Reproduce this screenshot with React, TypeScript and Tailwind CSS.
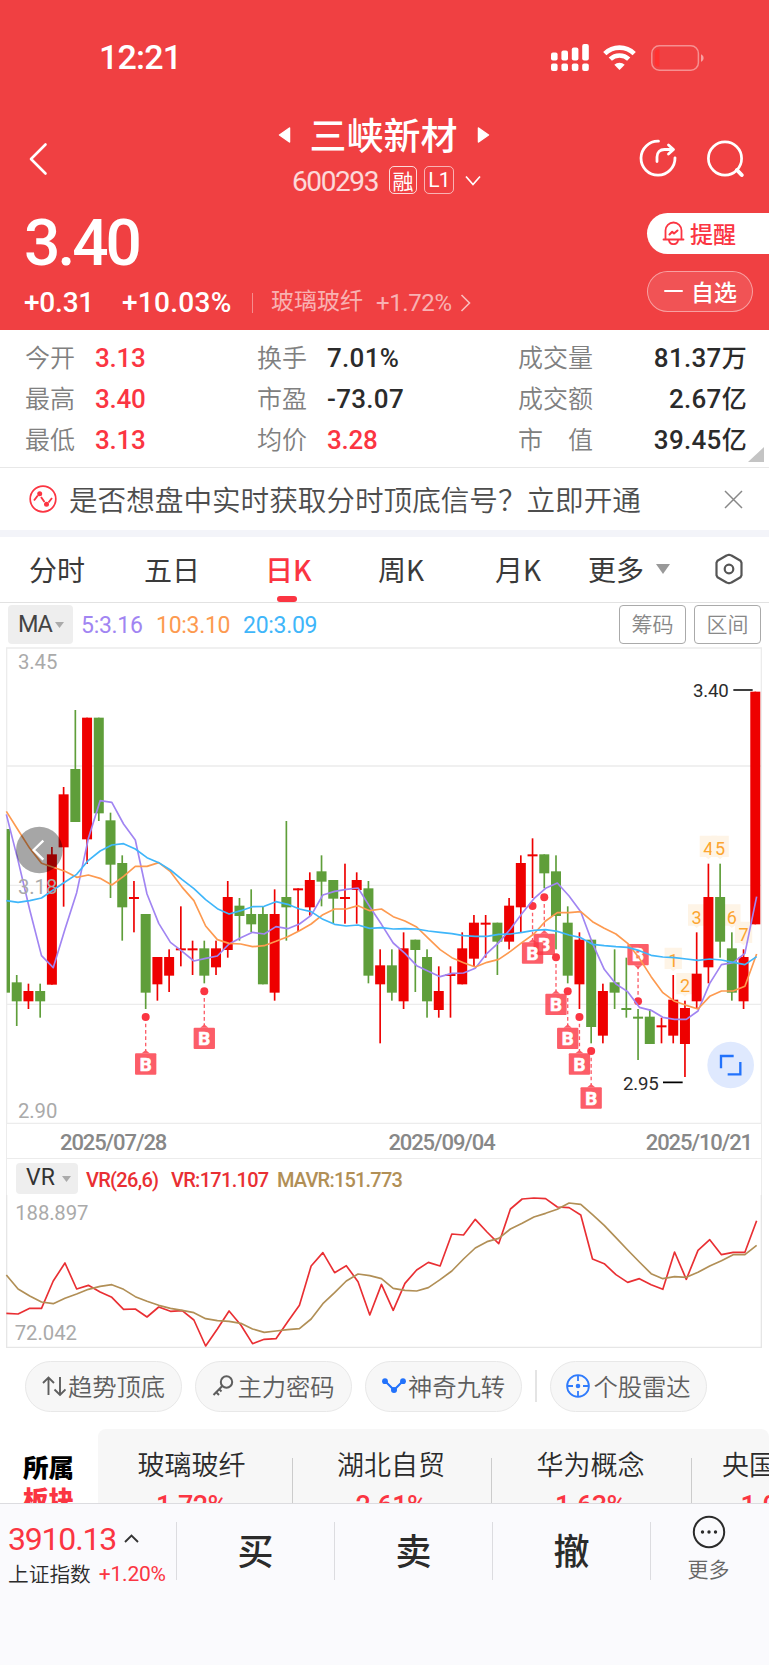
import { ReactNode } from 'react';
import clsx from 'clsx';

// K线图坐标：3 个单位 = 1px
const STEP = 35.17;
const RED = '#ee0000';
const GREEN = '#5f9e3a';

// [颜色, 最高, 实体上沿, 实体下沿, 最低]
type Candle = ['r' | 'g', number, number, number, number];

const candles: Candle[] = [
  ['g', 567, 567, 1058, 1058],
  ['g', 1005, 1027, 1084, 1158],
  ['r', 1031, 1053, 1084, 1107],
  ['g', 1031, 1053, 1084, 1133],
  ['r', 621, 643, 1034, 1034],
  ['r', 441, 463, 622, 800],
  ['g', 210, 387, 546, 546],
  ['r', 233, 233, 598, 672],
  ['g', 233, 233, 520, 543],
  ['g', 518, 541, 674, 774],
  ['g', 646, 669, 802, 902],
  ['r', 723, 771, 777, 877],
  ['g', 822, 822, 1058, 1107],
  ['r', 951, 951, 1033, 1082],
  ['r', 928, 951, 1007, 1056],
  ['r', 799, 925, 931, 979],
  ['r', 902, 925, 931, 1005],
  ['g', 902, 925, 1007, 1030],
  ['r', 902, 925, 982, 1005],
  ['r', 723, 771, 930, 953],
  ['g', 774, 797, 828, 902],
  ['g', 748, 822, 853, 876],
  ['g', 799, 822, 1033, 1033],
  ['r', 748, 822, 1058, 1082],
  ['g', 543, 771, 802, 902],
  ['r', 745, 745, 751, 876],
  ['r', 697, 720, 802, 827],
  ['g', 646, 694, 725, 799],
  ['g', 720, 720, 776, 851],
  ['r', 671, 771, 777, 851],
  ['r', 697, 720, 750, 851],
  ['g', 723, 745, 1007, 1030],
  ['r', 928, 976, 1033, 1210],
  ['g', 928, 976, 1058, 1082],
  ['r', 877, 925, 1084, 1107],
  ['g', 899, 899, 930, 1056],
  ['g', 928, 951, 1084, 1133],
  ['r', 979, 1053, 1110, 1133],
  ['r', 979, 1002, 1008, 1133],
  ['r', 877, 925, 1033, 1033],
  ['r', 825, 848, 956, 980],
  ['r', 825, 848, 854, 953],
  ['g', 848, 848, 905, 1005],
  ['r', 774, 797, 905, 928],
  ['r', 646, 669, 802, 876],
  ['r', 595, 643, 649, 774],
  ['g', 643, 643, 700, 745],
  ['g', 646, 694, 828, 928],
  ['g', 799, 848, 1007, 1030],
  ['r', 877, 899, 1033, 1107],
  ['g', 899, 899, 1161, 1210],
  ['r', 1031, 1053, 1187, 1210],
  ['g', 928, 1027, 1058, 1107],
  ['g', 953, 1104, 1110, 1133],
  ['g', 1107, 1130, 1136, 1260],
  ['g', 1107, 1130, 1212, 1212],
  ['r', 1133, 1156, 1162, 1210],
  ['r', 1005, 1079, 1187, 1210],
  ['r', 1082, 1104, 1212, 1311],
  ['r', 877, 1001, 1084, 1107],
  ['r', 671, 771, 982, 1030],
  ['g', 671, 771, 905, 953],
  ['g', 877, 925, 1058, 1082],
  ['r', 928, 951, 1084, 1107],
  ['r', 155, 155, 853, 853],
];

const ma5 = [
  523, 662, 810, 947, 983, 868, 758, 595, 482, 487, 552, 600, 762, 850, 907, 934,
  963, 955, 948, 912, 893, 877, 882, 860, 866, 852, 826, 765, 754, 748, 744, 800,
  853, 909, 940, 977, 994, 1010, 1000, 999, 985, 940, 908, 867, 820, 776, 745,
  729, 768, 815, 910, 988, 1032, 1055, 1102, 1111, 1132, 1138, 1138, 1113, 1030,
  974, 968, 940, 770,
];
const ma10 = [
  514, 570, 625, 670, 682, 694, 712, 705, 715, 735, 709, 679, 679, 668, 695, 742,
  782, 858, 899, 910, 912, 920, 917, 904, 890, 872, 852, 824, 807, 807, 797, 812,
  807, 830, 843, 861, 895, 929, 953, 968, 981, 967, 958, 934, 907, 882, 843, 818,
  818, 815, 845, 865, 882, 910, 955, 1010, 1058, 1084, 1096, 1107, 1069, 1053,
  1053, 1039, 942,
];
const ma20 = [
  782, 787, 782, 774, 750, 726, 703, 661, 633, 615, 611, 627, 653, 668, 690, 719,
  746, 779, 806, 822, 812, 800, 799, 785, 793, 807, 815, 838, 853, 858, 855, 865,
  863, 867, 866, 867, 873, 877, 881, 887, 889, 889, 883, 882, 877, 871, 869, 874,
  885, 893, 913, 917, 920, 922, 932, 946, 951, 953, 957, 961, 957, 960, 967, 974,
  950,
];

const vr = [
  550, 552, 535, 535, 453, 399, 477, 466, 486, 502, 538, 537, 561, 531, 544, 542,
  570, 648, 597, 543, 585, 641, 628, 626, 575, 526, 408, 368, 428, 407, 455, 555,
  463, 541, 460, 420, 397, 408, 312, 315, 268, 306, 341, 237, 207, 204, 206, 231,
  233, 255, 387, 401, 434, 457, 446, 464, 478, 366, 448, 361, 329, 374, 367, 367,
  272,
];
const mavr = [
  435, 477, 498, 516, 521, 505, 492, 478, 469, 464, 478, 500, 514, 526, 535, 541,
  548, 566, 572, 574, 580, 597, 607, 603, 599, 596, 567, 521, 488, 453, 432, 437,
  446, 475, 481, 483, 473, 449, 423, 387, 354, 335, 325, 297, 280, 261, 250, 238,
  219, 223, 254, 286, 323, 360, 396, 431, 446, 440, 442, 427, 408, 392, 374, 374,
  346,
];

// 买点标记 [K线序号, 圆点 y]
const buyPoints: [number, number][] = [
  [12, 1131],
  [17, 1054],
  [46, 772],
  [45, 798],
  [47, 952],
  [48, 1054],
  [49, 1131],
  [50, 1233],
];

// 神奇九转 [K线序号, 基线 y]
const nineTurn: [number, number][] = [
  [57, 981],
  [58, 1057],
  [59, 851],
  [60, 645],
  [61, 645],
  [62, 851],
  [63, 903],
];

const stats = [
  [
    { label: '今开', value: '3.13', up: true },
    { label: '换手', value: '7.01%' },
    { label: '成交量', value: '81.37', unit: '万' },
  ],
  [
    { label: '最高', value: '3.40', up: true },
    { label: '市盈', value: '-73.07' },
    { label: '成交额', value: '2.67', unit: '亿' },
  ],
  [
    { label: '最低', value: '3.13', up: true },
    { label: '均价', value: '3.28', up: true },
    { label: '市　值', value: '39.45', unit: '亿' },
  ],
];

const sectors = [
  { name: '玻璃玻纤', rate: '1.72%' },
  { name: '湖北自贸', rate: '2.61%' },
  { name: '华为概念', rate: '1.63%' },
  { name: '央国企改', rate: '1.05%' },
];

const centerX = (i: number) => 15 + STEP * i;

const toPoints = (values: number[]) =>
  values.map((v, i) => `${(19 + STEP * i).toFixed(1)},${v}`).join(' ');

const NUM = "font-['Roboto','Noto_Sans_CJK_SC',sans-serif]";

const StatusBar = () => (
  <div className="flex h-[115px] items-center justify-between pl-[99px] pr-[65px]">
    <span className={clsx(NUM, 'text-[34px] font-medium tracking-[-0.8px]')}>
      12:21
    </span>
    <div className="flex items-center">
      {/* 双卡信号 */}
      <svg width="38" height="28" viewBox="0 0 38 28" fill="currentColor">
        <rect x="0" y="8.5" width="6.6" height="8" rx="2" />
        <rect x="10.4" y="6.5" width="6.6" height="10" rx="2" />
        <rect x="20.8" y="3.5" width="6.6" height="13" rx="2" />
        <rect x="31.2" y="0" width="6.6" height="16.5" rx="2" />
        <rect x="0" y="19.5" width="6.6" height="7.5" rx="2" />
        <rect x="10.4" y="19.5" width="6.6" height="7.5" rx="2" />
        <rect x="20.8" y="19.5" width="6.6" height="7.5" rx="2" />
        <rect x="31.2" y="19.5" width="6.6" height="7.5" rx="2" />
      </svg>
      <svg className="ml-[14px]" width="33" height="26" viewBox="0 0 33 26">
        <path
          d="M1.8 8.6a21 21 0 0 1 29.4 0M7.3 14.2a13.2 13.2 0 0 1 18.4 0"
          fill="none"
          stroke="currentColor"
          strokeWidth="4.6"
        />
        <path d="M16.5 25l-5.2-5.2a7.4 7.4 0 0 1 10.4 0z" fill="currentColor" />
      </svg>
      <svg className="ml-[15px]" width="53" height="26" viewBox="0 0 53 26">
        <rect
          x="0.8"
          y="0.8"
          width="46.6"
          height="24.4"
          rx="7.5"
          fill="none"
          stroke="#fff"
          strokeOpacity="0.42"
          strokeWidth="1.5"
        />
        <path d="M8.5 4.2v17.6h-1a3.6 3.6 0 0 1-3.6-3.6V7.8a3.6 3.6 0 0 1 3.6-3.6z" fill="#ff3030" />
        <path d="M50 9.2c1.6.7 2.6 2 2.6 3.8s-1 3.1-2.6 3.8z" fill="#fff" fillOpacity="0.5" />
      </svg>
    </div>
  </div>
);

const Header = () => (
  <header className="h-[330px] bg-[#f04042] text-white">
    <StatusBar />
    <div className="flex h-[89px]">
      <div className="flex w-[229px] pl-7 pt-[27px]">
        <svg width="20" height="34" viewBox="0 0 20 34">
          <path d="M17.5 2.5L3 17l14.5 14.5" fill="none" stroke="#fff" strokeWidth="2.6" strokeLinecap="round" strokeLinejoin="round" />
        </svg>
      </div>
      <div className="flex w-[309px] flex-col items-center">
        <div className="flex h-10 items-center">
          <svg width="13" height="18" viewBox="0 0 13 18">
            <path d="M11.5 2v14L1.5 9z" fill="#fff" stroke="#fff" strokeWidth="1.5" strokeLinejoin="round" />
          </svg>
          <h1 className="mx-[19px] -mt-[3px] text-[37px] leading-10 font-medium">三峡新材</h1>
          <svg width="13" height="18" viewBox="0 0 13 18">
            <path d="M1.5 2v14l10-7z" fill="#fff" stroke="#fff" strokeWidth="1.5" strokeLinejoin="round" />
          </svg>
        </div>
        <div className="mt-[9px] ml-1.5 flex h-8 items-center">
          <span className={clsx(NUM, 'mt-[3px] text-[28px] tracking-[-1.4px] text-white/80')}>600293</span>
          <span className="ml-[11px] flex size-[28px] items-center justify-center rounded-[5px] border border-white/80 text-[21px] leading-none">
            融
          </span>
          <span className={clsx(NUM, 'ml-[7px] flex h-[28px] w-[30px] items-center justify-center rounded-[5px] border border-white/60 text-[21px] leading-none tracking-[-0.8px]')}>
            L1
          </span>
          <svg className="ml-[11px]" width="16" height="11" viewBox="0 0 16 11">
            <path d="M1 1.5l7 8 7-8" fill="none" stroke="#fff" strokeWidth="1.7" />
          </svg>
        </div>
      </div>
      <div className="flex flex-1 items-start justify-end gap-[29px] pt-6 pr-[25px]">
        {/* 分享 */}
        <svg width="38" height="38" viewBox="0 0 38 38" fill="none" stroke="#fff" strokeWidth="2.8" strokeLinecap="round" strokeLinejoin="round">
          <path d="M19.5 2.2A17 17 0 1 0 36 18.8" />
          <path d="M18 22.5v-4.5c0-4.500 3-7.500 7.500-7.500h8M29.500 6l5 4.500-5 4.500" />
        </svg>
        <svg width="38" height="39" viewBox="0 0 38 39" fill="none" stroke="#fff" strokeWidth="2.7">
          <circle cx="19" cy="19.5" r="16.6" />
          <path d="M31 31l4.7 5" strokeWidth="4" strokeLinecap="round" />
        </svg>
      </div>
    </div>
    <div className="flex h-[126px] justify-between">
      <div className="pl-6">
        <p className={clsx(NUM, 'h-[82px] pt-[7px] text-[64px] leading-[66px] font-medium tracking-[-3px]')}>3.40</p>
        <div className={clsx(NUM, 'flex h-[33px] items-center text-[28px] font-medium tracking-[-0.2px]')}>
          <span className="w-[98px]">+0.31</span>
          <span className="w-[130px] tracking-[0.3px]">+10.03%</span>
          <span className="mr-[18px] h-5 w-px bg-white/40" />
          <span className="text-[23px] font-normal tracking-normal text-white/60">玻璃玻纤</span>
          <span className="ml-[13px] text-[24px] font-normal tracking-[-0.4px] text-white/60">+1.72%</span>
          <svg className="ml-2" width="11" height="18" viewBox="0 0 11 18">
            <path d="M1.5 1l8 8-8 8" fill="none" stroke="#fff" strokeOpacity="0.65" strokeWidth="1.6" />
          </svg>
        </div>
      </div>
      <div className="flex w-[122px] flex-col gap-[17px] pt-[9px] text-[23px]">
        <button className="flex h-[41px] items-center rounded-l-full bg-white pb-px pl-[15px] font-medium text-[#fb3542]">
          <svg className="mr-[5px]" width="23" height="24" viewBox="0 0 23 24" fill="none" stroke="currentColor" strokeWidth="1.8" strokeLinejoin="round" strokeLinecap="round">
            <path d="M1.5 18.5h20M3.5 18V9.500a8 8 0 0 1 16 0V18" />
            <path d="M7 19.5a4.600 4.600 0 0 0 9 0" />
            <path d="M7.5 13.5l2.7-2.7 1.8 1.7 3.5-3" strokeWidth="2" />
          </svg>
          提醒
        </button>
        <button className="flex h-[41px] w-[106px] items-center rounded-full border border-white/45 bg-white/10 pb-px pl-[16px] font-medium">
          <span className="mr-[8px] h-[2px] w-[19px] rounded bg-white" />
          自选
        </button>
      </div>
    </div>
  </header>
);

const Stats = () => (
  <section className="flex h-[138px] border-b border-[#e8e8e8] pt-[6px] text-[25px] text-[#808080]">
    <div className="flex flex-1 flex-col pl-[25px]">
      {stats.map((row, r) => (
        <div key={r} className="flex h-[41px] items-center">
          {row.map((cell, c) => (
            <div key={cell.label} className={clsx('flex items-center', c === 2 && 'flex-1', c === 0 && 'w-[232px]', c === 1 && 'w-[261px]')}>
              <span className={clsx('font-[350]', c < 2 ? 'w-[70px]' : 'flex-1')}>{cell.label}</span>
              <span className={clsx(NUM, 'relative top-[2px] text-[26px] font-medium', cell.up ? 'tracking-[-0.3px] text-[#fb3542]' : 'tracking-[0.3px] text-[#2b2b2b]')}>
                {cell.value}
                {cell.unit && <span className="text-[25px]">{cell.unit}</span>}
              </span>
            </div>
          ))}
        </div>
      ))}
    </div>
    <div className="flex w-[22px] items-end pb-[5px]">
      <svg width="17" height="15" viewBox="0 0 17 15">
        <path d="M17 0v15H1z" fill="#c4c4c4" />
      </svg>
    </div>
  </section>
);

const Notice = () => (
  <section className="flex h-[69px] items-center border-b-7 border-[#f3f4f9] pr-[26px] pl-[29px]">
    <svg width="28" height="28" viewBox="0 0 28 28" fill="none" stroke="#fb3542" strokeWidth="1.7">
      <circle cx="14" cy="14" r="12.8" />
      <path d="M5 15.5l3.8-5M12 12l3.5 5M19.5 17.5l3.5-4.5" strokeWidth="1.9" />
      <circle cx="10.7" cy="8.7" r="2.5" fill="#fb3542" stroke="none" />
      <circle cx="17.5" cy="19.3" r="2.5" fill="#fb3542" stroke="none" />
    </svg>
    <p className="ml-3 flex-1 text-[28.6px] font-[350] whitespace-nowrap text-[#4d4d4d]">
      是否想盘中实时获取分时顶底信号？立即开通
    </p>
    <svg width="19" height="19" viewBox="0 0 19 19">
      <path d="M1 1l17 17M18 1L1 18" stroke="#888" strokeWidth="1.5" />
    </svg>
  </section>
);

const Tab = ({ children, className, active }: { children: ReactNode; className: string; active?: boolean }) => (
  <div className={clsx('relative flex h-full items-center', className, active && 'font-medium text-[#fb3542]')}>
    {children}
    {active && <span className="absolute bottom-0 left-3 h-[6px] w-5 rounded-[3px] bg-[#fb3542]" />}
  </div>
);

const Tabs = () => (
  <nav className="flex h-[66px] items-center border-b border-[#e2e2e2] pl-[29px] text-[28px] text-[#3a3a3a]">
    <Tab className="w-[115px] pb-[2px]">分时</Tab>
    <Tab className="w-[121px] pb-[2px]">五日</Tab>
    <Tab className="w-[113px] pb-[2px]" active>日K</Tab>
    <Tab className="w-[117px] pb-[2px]">周K</Tab>
    <Tab className="w-[93px] pb-[2px]">月K</Tab>
    <Tab className="w-[126px] pb-[2px]">
      更多
      <svg className="ml-[12px]" width="14" height="10" viewBox="0 0 14 10">
        <path d="M0 0h14L7 10z" fill="#999" />
      </svg>
    </Tab>
    <svg className="-mt-[2px]" width="30" height="32" viewBox="0 0 30 32" fill="none" stroke="#555" strokeWidth="2.2" strokeLinejoin="round">
      <path d="M15 1.800l2.500.700 9 5.300 1 2v12.400l-1 2-9 5.300-2.500.700-2.500-.700-9-5.300-1-2V9.800l1-2 9-5.300z" />
      <circle cx="15" cy="16" r="4.3" />
    </svg>
  </nav>
);

const MaBar = () => (
  <div className="flex h-[43px] items-center pr-2 pl-2">
    <div className={clsx(NUM, 'flex h-[39px] w-[65px] items-center rounded bg-[#eee] pt-px pl-[10px] text-[23.5px] tracking-[-1.2px] text-[#444]')}>
      MA
      <svg className="ml-[3px]" width="9" height="6" viewBox="0 0 9 6">
        <path d="M0 0h9L4.500 6z" fill="#aaa" />
      </svg>
    </div>
    <div className={clsx(NUM, 'ml-[8px] flex flex-1 pt-[3px] text-[23px] tracking-[-0.3px]')}>
      <span className="w-[75px] text-[#a185f2]">5:3.16</span>
      <span className="w-[87px] text-[#fd9a50]">10:3.10</span>
      <span className="text-[#3fb6fa]">20:3.09</span>
    </div>
    <div className="flex gap-2 text-[21px] font-[350] text-[#888]">
      <button className="h-[39px] w-[67px] rounded border border-[#aaa] pb-0.5">筹码</button>
      <button className="h-[39px] w-[67px] rounded border border-[#aaa] pb-0.5">区间</button>
    </div>
  </div>
);

const BuyMark = ({ x, y, down }: { x: number; y: number; down?: boolean }) => {
  const top = down ? y - 172 : y + 109;
  return (
    <g>
      <circle cx={x} cy={y} r="12" fill="#fb3542" />
      <path
        d={down ? `M${x} ${y - 20}V${top + 70}` : `M${x} ${y + 20}V${top - 8}`}
        stroke="#fb3542"
        strokeOpacity="0.8"
        strokeWidth="4"
        strokeDasharray="11 8"
      />
      <g fill="#fb3542" fillOpacity="0.8">
        <rect x={x - 32} y={top} width="64" height="64" rx="3" />
        <path d={down ? `M${x - 12} ${top + 64}h24l-12 10z` : `M${x - 12} ${top}h24l-12 -10z`} />
      </g>
      <text x={x} y={top + 52} fill="#fff" stroke="#fff" strokeWidth="2" fontSize="56" fontWeight="700" textAnchor="middle">
        B
      </text>
    </g>
  );
};

const KLineChart = () => (
  <svg className={clsx(NUM, 'block')} width="769" height="478" viewBox="0 18 2307 1434">
    <path d="M20 24H2284M20 378H2284M20 736H2284M20 1093H2284M20 1450H2284M20 22V1452M2284 22V1452" stroke="#ececec" strokeWidth="4" />

    {/* 九转数字底色 */}
    {nineTurn.map(([i, y], n) => (
      <g key={i}>
        <path d={`M${centerX(i) - 26} ${y - 58}h52v64h-18l-8 7-8-7h-18z`} fill="#fef4e6" />
        <text x={centerX(i)} y={y} fill="#fca530" fontSize="54" textAnchor="middle">
          {n + 1}
        </text>
      </g>
    ))}

    {candles.map(([color, high, top, bottom, low], i) => {
      const x = centerX(i);
      const left = Math.max(x - 15, 20);
      const fill = color === 'r' ? RED : GREEN;
      return (
        <g key={i} fill={fill}>
          {i > 0 && <rect x={x - 2.5} y={high} width="5" height={low - high} />}
          <rect x={left} y={top} width={x + 15 - left} height={bottom - top} />
        </g>
      );
    })}

    {buyPoints.map(([i, y]) => (
      <BuyMark key={i} x={centerX(i)} y={y} />
    ))}
    <BuyMark x={centerX(54)} y={1084} down />

    <g fill="none" strokeWidth="5" strokeLinejoin="round">
      <polyline points={toPoints(ma5)} stroke="#a185f2" />
      <polyline points={toPoints(ma10)} stroke="#fd9a50" />
      <polyline points={toPoints(ma20)} stroke="#3fb6fa" />
    </g>

    <g fill="#aaa" fontSize="61">
      <text x="54" y="86" textLength="118">3.45</text>
      <text x="54" y="762" textLength="118">3.18</text>
      <text x="54" y="1434" textLength="118">2.90</text>
    </g>

    {/* 区间最高 / 最低 */}
    <g fill="#2b2b2b" fontSize="56">
      <text x="2079" y="172" textLength="107">3.40</text>
      <text x="1869" y="1349" textLength="107">2.95</text>
    </g>
    <path d="M2200 150h58M1989 1327h59" stroke="#000" strokeWidth="5" />

    <circle cx="118" cy="630" r="70" fill="#000" fillOpacity="0.35" />
    <path d="M130 602L101 630l29 29" fill="none" stroke="#fff" strokeWidth="7" />

    <circle cx="2192" cy="1275" r="70" fill="#dfe9fe" />
    <path d="M2163 1285V1248H2201M2221 1266V1303H2183" fill="none" stroke="#2272fb" strokeWidth="7" />
  </svg>
);

const DateAxis = () => (
  <div className={clsx(NUM, 'mr-[7px] ml-[6px] flex h-[35px] items-center justify-between border-x border-b border-[#ececec] pt-[2px] pr-[9px] pl-[53px] text-[22px] font-medium tracking-[-1.1px] text-[#888]')}>
    <span>2025/07/28</span>
    <span className="ml-[71px]">2025/09/04</span>
    <span>2025/10/21</span>
  </div>
);

const VrPanel = () => (
  <section className={NUM}>
    <div className="mr-[7px] ml-[6px] flex h-9 items-center border-x border-[#ececec] pt-[3px] pl-[9px] font-medium">
      <div className="flex h-[31px] w-[62px] items-center rounded bg-[#eee] pl-[10px] text-[23px] font-normal text-[#333]">
        VR
        <svg className="ml-[7px]" width="9" height="6" viewBox="0 0 9 6">
          <path d="M0 0h9L4.500 6z" fill="#aaa" />
        </svg>
      </div>
      <div className="flex pt-[2px] pl-[8px] text-[20px] text-[#e92f33]">
        <span className="w-[85px] tracking-[-0.7px]">VR(26,6)</span>
        <span className="w-[106px] tracking-[-0.7px]">VR:171.107</span>
        <span className="tracking-[-0.8px] text-[#b18f56]">MAVR:151.773</span>
      </div>
    </div>
    <svg className="block" width="769" height="154" viewBox="0 195 2307 462">
      <path d="M20 195V652H2284V195" fill="none" stroke="#e6e6e6" strokeWidth="4" />
      <g fill="#aaa" fontSize="61">
        <text x="46" y="269" textLength="219">188.897</text>
        <text x="44" y="631" textLength="187">72.042</text>
      </g>
      <g fill="none" strokeWidth="5" strokeLinejoin="round">
        <polyline points={toPoints(vr)} stroke="#e92f33" />
        <polyline points={toPoints(mavr)} stroke="#b18f56" />
      </g>
    </svg>
  </section>
);

const Pill = ({ icon, children }: { icon: ReactNode; children: ReactNode }) => (
  <button className="flex h-[51px] w-[157px] items-center justify-center rounded-full border border-[#e8e8e8] bg-[#f7f7f7] text-[24.3px] font-[350] whitespace-nowrap text-[#5e5e5e]">
    {icon}
    {children}
  </button>
);

const Tools = () => (
  <div className="flex h-[74px] items-center gap-[13px] pl-[25px]">
    <Pill
      icon={
        <svg className="mr-[2px]" width="24" height="22" viewBox="0 0 24 22" fill="none" stroke="#5e5e5e" strokeWidth="1.9">
          <path d="M1 8l5.500-5.500L12 8M6.500 3v17M12.500 14.500l5.500 5.500 5.500-5.500M18 19.500V2" />
        </svg>
      }>
      趋势顶底
    </Pill>
    <Pill
      icon={
        <svg className="mr-[3px]" width="22" height="22" viewBox="0 0 22 22" fill="none" stroke="#5e5e5e" strokeWidth="2">
          <circle cx="14.5" cy="7" r="5.7" />
          <path d="M10.3 11L1.5 20M3.500 16.500l3.500 3.500M6.500 13.500l3 3" />
        </svg>
      }>
      主力密码
    </Pill>
    <Pill
      icon={
        <svg className="mr-[2px]" width="24" height="16" viewBox="0 0 24 16" fill="#2272fb">
          <path d="M3 3l9 9 9-9" fill="none" stroke="#2272fb" strokeWidth="2" />
          <circle cx="3" cy="3.2" r="2.9" />
          <circle cx="21" cy="3.2" r="2.9" />
          <circle cx="12" cy="12" r="3" />
        </svg>
      }>
      神奇九转
    </Pill>
    <span className="h-8 w-[2px] bg-[#e4e4e4]" />
    <Pill
      icon={
        <svg className="mr-[3px]" width="24" height="24" viewBox="0 0 24 24" fill="none" stroke="#2f7bfc" strokeWidth="1.8">
          <circle cx="12" cy="12" r="10.9" />
          <path d="M12 1v6M12 17v6M1 12h6M17 12h6" />
          <circle cx="12" cy="12" r="2.3" fill="#2f7bfc" stroke="none" />
        </svg>
      }>
      个股雷达
    </Pill>
  </div>
);

const Sectors = () => (
  <section className="flex h-[80px] overflow-hidden pt-[6px]">
    <div className="w-[98px] shrink-0 pt-[21px] pl-[23px] text-[25.5px] leading-8 font-black text-black">
      <p>所属</p>
      <p className="text-[#fb3542]">板块</p>
    </div>
    <div className="flex w-[671px] shrink-0 overflow-hidden rounded-t-lg bg-[#f7f7f7]">
      {sectors.map((s, i) => (
        <div key={s.name} className="relative w-[199.5px] shrink-0">
          <div className={clsx('flex flex-col items-center pt-[17px]', i < 3 ? 'w-[187px]' : 'w-[159px]')}>
            <span className="text-[27px] leading-9 font-[350] text-[#2b2b2b]">{s.name}</span>
            <span className={clsx(NUM, 'mt-[8px] text-[27px] leading-[32px] font-medium tracking-[-0.5px] text-[#fb3542]')}>{s.rate}</span>
          </div>
          {i < 3 && <span className="absolute top-[29px] right-[5px] h-14 w-px bg-[#ccc]" />}
        </div>
      ))}
    </div>
  </section>
);

const BottomBar = () => (
  <footer className="flex h-[162px] border-t border-[#dcdce0] bg-[#fafafd] text-[#2b2b2b]">
    <div className="w-[176px] pt-[16px] pl-2">
      <div className="flex h-[38px] items-center">
        <span className={clsx(NUM, 'text-[32px] tracking-[-1.2px] text-[#fb3542]')}>3910.13</span>
        <svg className="ml-[8px] -mt-[2px]" width="15" height="9" viewBox="0 0 15 9">
          <path d="M1 8l6.500-6.500L14 8" fill="none" stroke="#333" strokeWidth="1.9" />
        </svg>
      </div>
      <div className="flex h-8 items-center text-[20.7px] font-[350] whitespace-nowrap">
        上证指数
        <span className={clsx(NUM, 'ml-[8px] pt-[2px] text-[21px] font-normal tracking-[-0.2px] text-[#fb3542]')}>+1.20%</span>
      </div>
    </div>
    {['买', '卖', '撤'].map((name) => (
      <button key={name} className="mt-[18px] flex h-[58px] w-[158px] items-center justify-center border-l border-[#dcdce0] pb-1 text-[36px] font-medium">
        {name}
      </button>
    ))}
    <button className="mt-[18px] flex h-[58px] w-[116px] flex-col items-center border-l border-[#dcdce0]">
      <svg className="-mt-[7px] shrink-0" width="34" height="34" viewBox="0 0 34 34">
        <circle cx="17" cy="17" r="15.2" fill="none" stroke="#2b2b2b" strokeWidth="2" />
        <g fill="#2b2b2b">
          <circle cx="10.5" cy="17" r="1.7" />
          <circle cx="17" cy="17" r="1.7" />
          <circle cx="23.5" cy="17" r="1.7" />
        </g>
      </svg>
      <span className="mt-[4px] text-[21px] leading-[30px] font-[350] text-[#666]">更多</span>
    </button>
  </footer>
);

const App = () => (
  <main className="h-[1665px] w-[769px] overflow-hidden bg-white font-['Noto_Sans_CJK_SC',sans-serif]">
    <Header />
    <Stats />
    <Notice />
    <Tabs />
    <MaBar />
    <KLineChart />
    <DateAxis />
    <VrPanel />
    <Tools />
    <Sectors />
    <BottomBar />
  </main>
);

export default App;
